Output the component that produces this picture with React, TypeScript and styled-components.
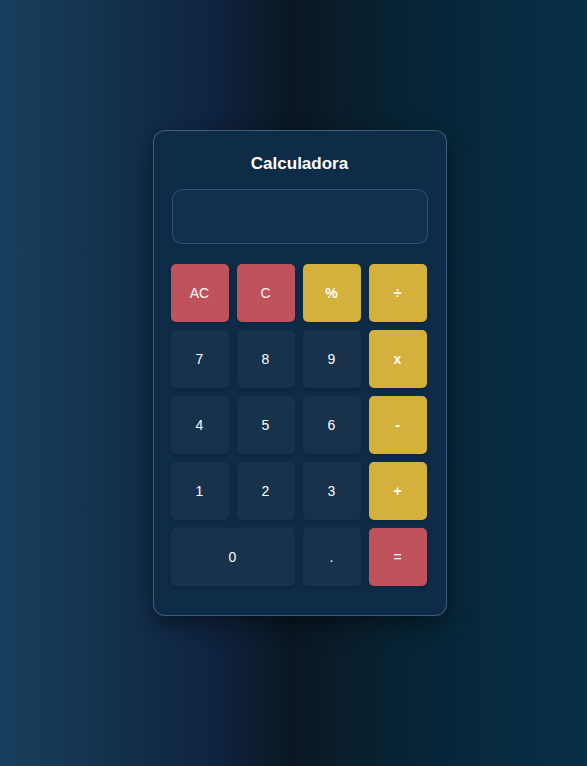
import React from "react";
import styled, { createGlobalStyle, css } from "styled-components";

const Global = createGlobalStyle`
  html, body { margin: 0; padding: 0; }
  body {
    min-height: 766px;
    font-family: "Liberation Sans", Arial, sans-serif;
    background: linear-gradient(to right, #173f5d 0%, #12314c 20%, #0f2440 36%, #0a1723 50%, #08202f 62%, #062739 75%, #072f45 100%);
  }
`;

const Page = styled.div`
  height: 766px;
  display: flex;
  justify-content: center;
  padding: 130px 0 0 12px;
  box-sizing: border-box;
`;

const Card = styled.div`
  width: 294px;
  height: 486px;
  box-sizing: border-box;
  padding: 18px 18px 28px;
  border: 1px solid rgba(120, 160, 195, 0.45);
  border-radius: 12px;
  background: #0e2b48;
  box-shadow: 0 8px 24px rgba(0, 0, 0, 0.45);
  display: flex;
  flex-direction: column;
`;

const Title = styled.h2`
  margin: 6px 0 16px;
  font-size: 17px;
  line-height: 18px;
  font-weight: 700;
  color: #ffffff;
  text-align: center;
`;

const Display = styled.div`
  height: 55px;
  box-sizing: border-box;
  margin: 0 0 20px;
  border: 1px solid rgba(120, 160, 195, 0.3);
  border-radius: 10px;
  background: #10314d;
`;

const Grid = styled.div`
  display: grid;
  grid-template-columns: repeat(4, 58px);
  grid-auto-rows: 58px;
  gap: 8px;
  margin-left: -1px;
`;

type Variant = "num" | "red" | "op";

const Key = styled.button<{ $variant: Variant; $span?: number }>`
  border: none;
  border-radius: 5px;
  font-family: "Liberation Sans", Arial, sans-serif;
  font-size: 14px;
  color: #ffffff;
  cursor: pointer;
  padding: 0;
  grid-column: span ${(p) => p.$span ?? 1};
  box-shadow: 0 2px 4px rgba(0, 0, 0, 0.15);
  ${(p) =>
    p.$variant === "num"
      ? css`
          background: #17324a;
        `
      : p.$variant === "red"
      ? css`
          background: #c0525c;
        `
      : css`
          background: #d4b03c;
          font-weight: 700;
        `}
`;

const keys: { label: string; v: Variant; span?: number }[] = [
  { label: "AC", v: "red" },
  { label: "C", v: "red" },
  { label: "%", v: "op" },
  { label: "÷", v: "op" },
  { label: "7", v: "num" },
  { label: "8", v: "num" },
  { label: "9", v: "num" },
  { label: "x", v: "op" },
  { label: "4", v: "num" },
  { label: "5", v: "num" },
  { label: "6", v: "num" },
  { label: "-", v: "op" },
  { label: "1", v: "num" },
  { label: "2", v: "num" },
  { label: "3", v: "num" },
  { label: "+", v: "op" },
  { label: "0", v: "num", span: 2 },
  { label: ".", v: "num" },
  { label: "=", v: "red" },
];

export default function App() {
  return (
    <>
      <Global />
      <Page>
        <Card>
          <Title>Calculadora</Title>
          <Display />
          <Grid>
            {keys.map((k) => (
              <Key key={k.label} $variant={k.v} $span={k.span}>
                {k.label}
              </Key>
            ))}
          </Grid>
        </Card>
      </Page>
    </>
  );
}
